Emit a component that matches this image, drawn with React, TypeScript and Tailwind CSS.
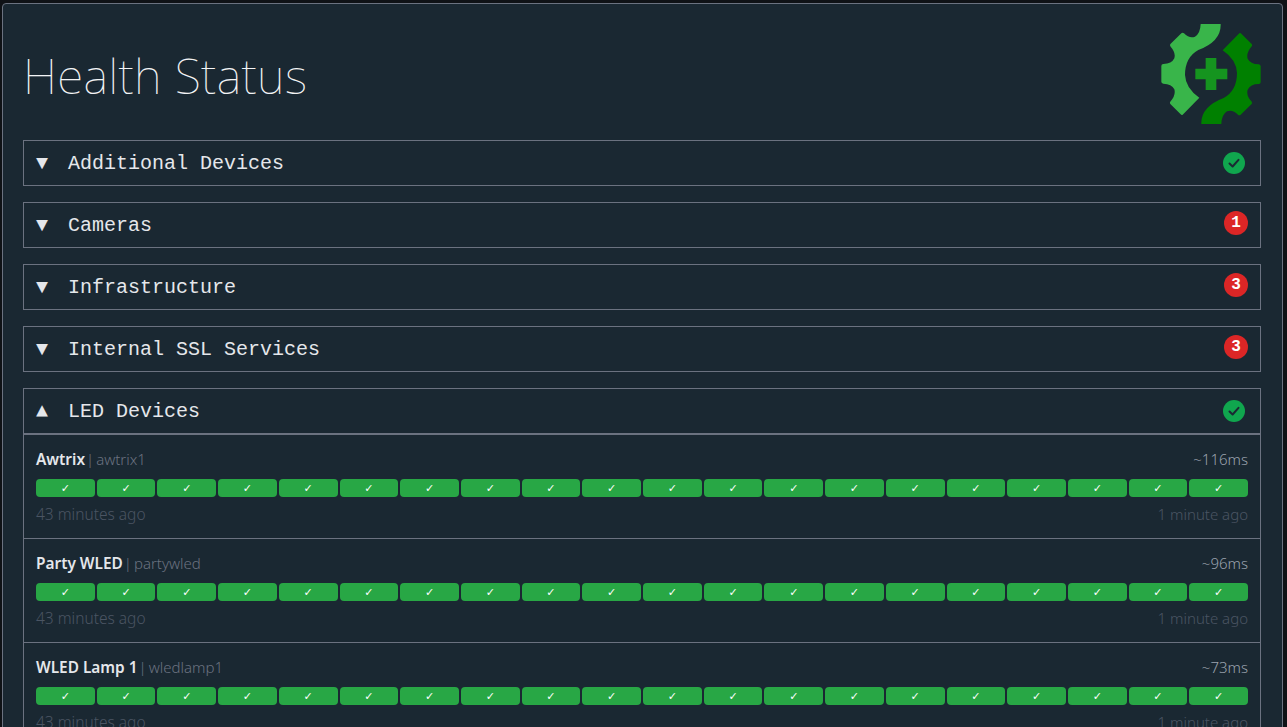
const sans = "font-['Noto_Sans',sans-serif]";

function Logo() {
  const half = "M182 72 Q184 71 242 72 Q244 124 175 150 Q135 172 135 225 Q137 265 178 293 L128 344 Q125 346 122 343 L91 312 Q88 308 92 304 Q108 285 103 268 Q95 252 70 251 Q64 250 64 245 L64 198 Q64 192 70 192 Q95 192 103 175 Q108 158 92 140 Q88 135 92 131 L124 100 Q128 96 132 100 Q148 116 165 110 Q181 100 182 72 Z";
  return (
    <svg width="100" height="100" viewBox="63 72 300 300" className="mt-[20px] shrink-0">
      <path d={half} fill="#39b54a" />
      <path d={half} fill="#008000" transform="rotate(180 213 222)" />
      <path d="M197 174 H229 V206 H262 V238 H229 V270 H197 V238 H166 V206 H197 Z" fill="#15941f" />
    </svg>
  );
}

function GreenCheck() {
  return (
    <span className="flex h-[22px] w-[22px] items-center justify-center rounded-full bg-[#10a64e]">
      <svg width="14" height="14" viewBox="0 0 14 14" fill="none">
        <path d="M2.5 7.5 L5.6 10.5 L11.5 3.8" stroke="#1a2a33" strokeWidth="2" strokeLinecap="round" strokeLinejoin="round" />
      </svg>
    </span>
  );
}

function RedBadge({ n }: { n: number }) {
  return (
    <span className="-mr-[3px] -mt-[4px] flex h-6 w-6 items-center justify-center rounded-full bg-[#dc2626] font-['Liberation_Mono',monospace] text-base font-bold text-white">
      {n}
    </span>
  );
}

function Group({ name, open, status, children }: { name: string; open?: boolean; status: React.ReactNode; children?: React.ReactNode }) {
  return (
    <section className="border border-[#6b7280]">
      <div className="flex h-[44px] items-center justify-between pl-3 pr-[15px]">
        <div className="flex items-center pt-[2px] font-['Liberation_Mono',monospace] text-xl text-[#e5e7eb]">
          <span className="w-[32px]">{open ? "▲" : "▼"}</span>
          <span>{name}</span>
        </div>
        {status}
      </div>
      {children && <div className="border-t-2 border-[#6b7280]">{children}</div>}
    </section>
  );
}

function Endpoint({ name, host, ms, last }: { name: string; host: string; ms: string; last?: boolean }) {
  return (
    <div className={`h-[104px] px-3 pt-[12px] ${sans} ${last ? "" : "border-b border-[#6b7280]"}`}>
      <div className="flex h-6 items-center justify-between text-[15px] leading-6">
        <div>
          <span className="text-[15.4px] font-semibold text-[#e5e7eb]">{name}</span>
          <span className="ml-[1px] mr-[2px] font-light text-[#6b7280]">|</span>
          <span className="font-light text-[#6b7280]">{host}</span>
        </div>
        <span className="font-light text-[#9ca3af]">{ms}</span>
      </div>
      <div className="mt-[8px] grid grid-cols-20 gap-[2px]">
        {Array.from({ length: 20 }).map((_, i) => (
          <div key={i} className="flex h-[18px] items-center justify-center rounded-[4px] bg-[#28a745] font-['DejaVu_Sans',sans-serif] text-[11px] leading-none text-white">
            ✓
          </div>
        ))}
      </div>
      <div className="mt-[5px] flex justify-between text-[15px] leading-6 font-light text-[#4b5563]">
        <span className="text-[15.5px]">43 minutes ago</span>
        <span>1 minute ago</span>
      </div>
    </div>
  );
}

export default function App() {
  return (
    <div className="h-[727px] overflow-hidden bg-[#0f1216] pl-[2px] pr-[4px] pt-[3px]">
      <main className="h-[760px] rounded-[4px] border border-[#6b7280] bg-[#1a2832] px-5">
        <header className="flex h-[136px] w-[1238px] items-start justify-between">
          <h1 className={`mt-[48px] ${sans} text-[48px] font-thin leading-none tracking-[0.3px] text-[#f3f4f6]`}>Health Status</h1>
          <Logo />
        </header>
        <div className="flex w-[1238px] flex-col gap-4">
          <Group name="Additional Devices" status={<GreenCheck />} />
          <Group name="Cameras" status={<RedBadge n={1} />} />
          <Group name="Infrastructure" status={<RedBadge n={3} />} />
          <Group name="Internal SSL Services" status={<RedBadge n={3} />} />
          <Group name="LED Devices" open status={<GreenCheck />}>
            <Endpoint name="Awtrix" host="awtrix1" ms="~116ms" />
            <Endpoint name="Party WLED" host="partywled" ms="~96ms" />
            <Endpoint name="WLED Lamp 1" host="wledlamp1" ms="~73ms" last />
          </Group>
        </div>
      </main>
    </div>
  );
}
